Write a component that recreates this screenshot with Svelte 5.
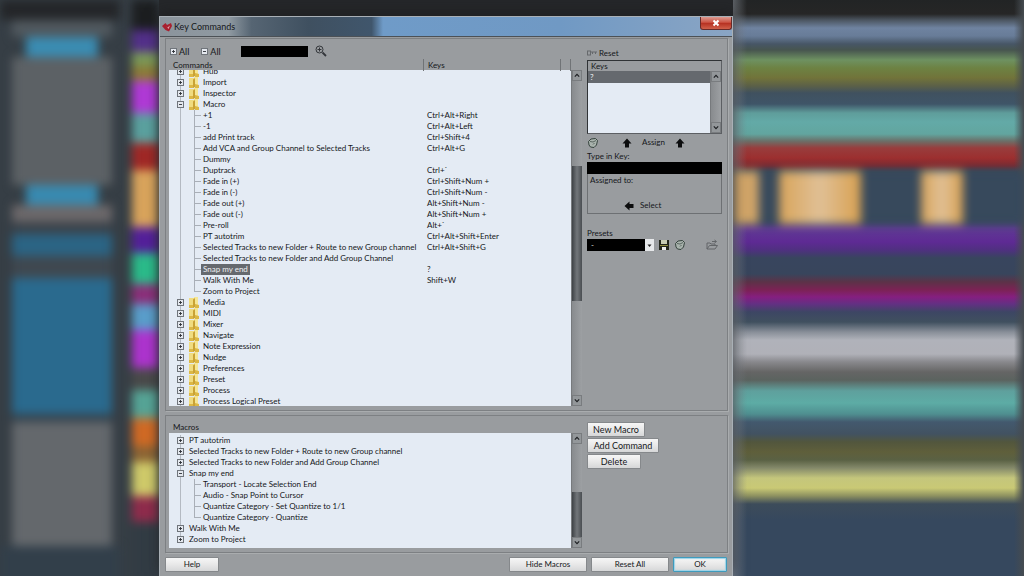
<script lang="ts">
	type Command = { name: string; keys?: string; kind: "folder" | "item"; open?: boolean };
	type Macro = { name: string; steps?: string[] };
	type Block = { h: number; color: string; from?: number; to?: number };

	const folder = (name: string, open = false): Command => ({ name, kind: "folder", open });
	const item = (name: string, keys = ""): Command => ({ name, keys, kind: "item" });

	const commands: Command[] = [
		folder("Hub"),
		folder("Import"),
		folder("Inspector"),
		folder("Macro", true),
		item("+1", "Ctrl+Alt+Right"),
		item("-1", "Ctrl+Alt+Left"),
		item("add Print track", "Ctrl+Shift+4"),
		item("Add VCA and Group Channel to Selected Tracks", "Ctrl+Alt+G"),
		item("Dummy"),
		item("Duptrack", "Ctrl+`"),
		item("Fade in (+)", "Ctrl+Shift+Num +"),
		item("Fade in (-)", "Ctrl+Shift+Num -"),
		item("Fade out (+)", "Alt+Shift+Num -"),
		item("Fade out (-)", "Alt+Shift+Num +"),
		item("Pre-roll", "Alt+`"),
		item("PT autotrim", "Ctrl+Alt+Shift+Enter"),
		item("Selected Tracks to new Folder + Route to new Group channel", "Ctrl+Alt+Shift+G"),
		item("Selected Tracks to new Folder and Add Group Channel"),
		item("Snap my end", "?"),
		item("Walk With Me", "Shift+W"),
		item("Zoom to Project"),
		folder("Media"),
		folder("MIDI"),
		folder("Mixer"),
		folder("Navigate"),
		folder("Note Expression"),
		folder("Nudge"),
		folder("Preferences"),
		folder("Preset"),
		folder("Process"),
		folder("Process Logical Preset")
	];

	const macros: Macro[] = [
		{ name: "PT autotrim" },
		{ name: "Selected Tracks to new Folder + Route to new Group channel" },
		{ name: "Selected Tracks to new Folder and Add Group Channel" },
		{
			name: "Snap my end",
			steps: [
				"Transport - Locate Selection End",
				"Audio - Snap Point to Cursor",
				"Quantize Category - Set Quantize to 1/1",
				"Quantize Category - Quantize"
			]
		},
		{ name: "Walk With Me" },
		{ name: "Zoom to Project" }
	];

	// inspector column; from/to are insets in percent
	const inspector: Block[] = [
		{ h: 20, color: "#242629", from: 0, to: 0 },
		{ h: 17, color: "#50585e" },
		{ h: 20, color: "#3a8cb2", from: 22, to: 18 },
		{ h: 128, color: "#5c6165" },
		{ h: 20, color: "#388ab0", from: 22, to: 18 },
		{ h: 17, color: "#6c686a" },
		{ h: 12, color: "#3a424a" },
		{ h: 22, color: "#2b6484" },
		{ h: 22, color: "#3f4850" },
		{ h: 136, color: "#2a6a8e" },
		{ h: 8, color: "#35424c" },
		{ h: 124, color: "#64686c" },
		{ h: 40, color: "#323f4a", from: 0, to: 0 }
	];

	const swatches: Block[] = [
		{ h: 30, color: "#1c1e20" },
		{ h: 22, color: "#53308a" },
		{ h: 14, color: "#7a9a58" },
		{ h: 15, color: "#8d7a38" },
		{ h: 32, color: "#b03ad6" },
		{ h: 30, color: "#5ba19f" },
		{ h: 27, color: "#a02826" },
		{ h: 57, color: "#d9a45c" },
		{ h: 26, color: "#54209a" },
		{ h: 31, color: "#2bbb8a" },
		{ h: 20, color: "#8c2f7a" },
		{ h: 26, color: "#5a9ecb" },
		{ h: 38, color: "#ad34ce" },
		{ h: 22, color: "#4a4a4a" },
		{ h: 28, color: "#56a496" },
		{ h: 28, color: "#d06a25" },
		{ h: 16, color: "#8c6434" },
		{ h: 34, color: "#cfca6a" },
		{ h: 26, color: "#8f2c4c" },
		{ h: 60, color: "#323c44" }
	];

	let selected = $state("Snap my end");
	let search = $state("");
	let typed = $state("");
</script>

{#snippet toggle(open: boolean)}
	<svg class="toggle" viewBox="0 0 7 7" aria-hidden="true">
		<rect x=".5" y=".5" width="6" height="6" fill="#e4e8ee" stroke="#70757b" />
		<path d={open ? "M2 3.5h3" : "M2 3.5h3M3.5 2v3"} stroke="#2d3035" stroke-width=".9" />
	</svg>
{/snippet}

{#snippet scrollbar(top: number, size: number)}
	<div class="scroll" aria-hidden="true">
		<svg class="cap" viewBox="0 0 11 11"><path d="M2.500 7l3-3 3 3" /></svg>
		<div class="trough">
			<div style="height: {top}%"></div>
			{#if size}<div class="thumb" style="height: {size}%"></div>{/if}
		</div>
		<svg class="cap" viewBox="0 0 11 11"><path d="M2.500 4l3 3 3-3" /></svg>
	</div>
{/snippet}

{#snippet arrow(angle: number)}
	<svg class="arrow" viewBox="0 0 10 10" aria-hidden="true">
		<path d="M5 .5L9.500 5.500H7V9.500H3V5.500H.5z" fill="#0c0d0e" transform="rotate({angle} 5 5)" />
	</svg>
{/snippet}

{#snippet trash()}
	<svg class="icon" viewBox="0 0 12 12" fill="none" stroke="#35433d" aria-hidden="true">
		<path d="M1.500 4.500L4 2l4.500-.5 2 2L9.500 8 7 10.500 3.500 10 2 8z" fill="#a9b3ad" />
		<path d="M3 4.500l3 .5 3-1.500M6 7.500L7.500 6" stroke-width=".7" />
	</svg>
{/snippet}

<main class="desktop">
	<div class="project left" aria-hidden="true">
		<div class="inspector">
			{#each inspector as b}
				<div style="height: {b.h}px; background: {b.color}; margin: 0 {b.to ?? 7}% 0 {b.from ?? 10}%"></div>
			{/each}
		</div>
		<div class="swatches">
			{#each swatches as b}
				<div style="height: {b.h}px; background: {b.color}"></div>
			{/each}
		</div>
	</div>

	<section class="dialog" aria-label="Key Commands">
		<header class="titlebar">
			<svg class="logo" viewBox="0 0 10 10" aria-hidden="true">
				<path d="M0 4l3.500-3L5 3l4-2 1 3-3 5.500L3.500 8z" fill="#a8202f" />
				<path d="M4 4l1.500 1.500L8 3.500 6.500 7z" fill="#dfa3a8" />
			</svg>
			<h1>Key Commands</h1>
			<button class="close" aria-label="Close">
				<svg viewBox="0 0 8 8"><path d="M1.500 1.500l5 5M6.500 1.500l-5 5" stroke="#fff" stroke-width="2" /></svg>
			</button>
		</header>

		<div class="body">
			<div class="group top">
				<div class="main">
					<div class="tools">
						<button class="flat">{@render toggle(false)}All</button>
						<button class="flat">{@render toggle(true)}All</button>
						<input class="search" aria-label="Search" bind:value={search} />
						<button class="flat" aria-label="Find">
							<svg class="find" viewBox="0 0 12 12" fill="none" stroke="#33363a">
								<circle cx="4.500" cy="4.500" r="3.500" />
								<path d="M2.500 4.500h4M4.500 2.500v4" />
								<path d="M7.500 7.500l3.500 3.500" stroke-width="1.800" />
							</svg>
						</button>
					</div>
					<div class="list commands">
						<table>
							<thead>
								<tr><th>Commands</th><th>Keys</th><th></th></tr>
							</thead>
							<tbody>
								{#each commands as c, i}
									<tr onclick={() => (selected = c.name)}>
										<td class={c.kind} class:last={commands[i + 1]?.kind === "folder"}>
											{#if c.kind === "folder"}
												{@render toggle(!!c.open)}
												<svg class="folder-icon" viewBox="0 0 10 11" aria-hidden="true">
													<path d="M0 1h5v10H0z" fill="#f0dc80" />
													<path d="M5 0h4v10H5z" fill="#f5e694" />
													<path d="M4 2.500L6 1v9l-2 1z" fill="#c9a235" />
													<path d="M0 8h4v3H0zM6 7l4 1v3H6z" fill="#dcb845" />
												</svg>
											{/if}
											<span class="label" class:selected={c.name === selected}>{c.name}</span>
										</td>
										<td>{c.keys ?? ""}</td>
									</tr>
								{/each}
							</tbody>
						</table>
						{@render scrollbar(27, 43)}
					</div>
				</div>

				<aside>
					<button class="flat reset"><svg class="key" viewBox="0 0 10 6" fill="none" stroke="#66696c"><rect x=".5" y="1" width="3" height="4" /><path d="M4 2h6M5.500 2v2M8.500 2v2" /></svg>Reset</button>
					<div class="keys-box">
						<div class="keys-head">Keys</div>
						<div class="keys-list">
							<div class="keys-items"><div class="key-row">?</div></div>
							{@render scrollbar(0, 0)}
						</div>
					</div>
					<div class="assign">
						<button class="flat" aria-label="Delete key">{@render trash()}</button>
						<button class="flat mid">{@render arrow(0)}Assign{@render arrow(0)}</button>
					</div>
					<label for="typekey">Type in Key:</label>
					<input id="typekey" class="typekey" bind:value={typed} />
					<div class="assigned">
						<span>Assigned to:</span>
						<button class="flat select">{@render arrow(-90)}Select</button>
					</div>
					<label for="presets">Presets</label>
					<div class="presets">
						<span class="combo">
							<select id="presets"><option>-</option></select>
							<svg viewBox="0 0 9 11" aria-hidden="true"><path d="M2.500 5h4L4.500 7.500z" fill="#222" /></svg>
						</span>
						<button class="flat" aria-label="Save preset">
							<svg class="icon" viewBox="0 0 12 12">
								<path d="M1 1h10v10H1z" fill="#23261c" />
								<path d="M3 1h6v4H3z" fill="#c8ccb4" />
								<path d="M2 6h8v1H2z" fill="#8c8a3e" />
								<path d="M4 8h4v3H4z" fill="#eee" />
							</svg>
						</button>
						<button class="flat" aria-label="Remove preset">{@render trash()}</button>
						<button class="flat import" aria-label="Import">
							<svg class="icon" viewBox="0 0 12 12" fill="none" stroke="#626568">
								<path d="M1 10V4h3l1 1h4v2M1 10l2.500-3.500h8L9 10zM6 2.500h4M8.500 1l2 1.500-2 1.500" />
							</svg>
						</button>
					</div>
				</aside>
			</div>

			<div class="group bottom">
				<div class="main">
					<h2>Macros</h2>
					<div class="list">
						<ul class="macros">
							{#each macros as m}
								<li>
									<div class="node">{@render toggle(!!m.steps)}<span>{m.name}</span></div>
									{#if m.steps}
										<ul>
											{#each m.steps as step, i}
												<li class="item" class:last={i === m.steps.length - 1}>
													<span class="label">{step}</span>
												</li>
											{/each}
										</ul>
									{/if}
								</li>
							{/each}
						</ul>
						{@render scrollbar(52, 48)}
					</div>
				</div>
				<aside class="actions">
					<button class="btn w58">New Macro</button>
					<button class="btn w72">Add Command</button>
					<button class="btn">Delete</button>
				</aside>
			</div>

			<footer>
				<button class="btn">Help</button>
				<span class="spring"></span>
				<button class="btn w78">Hide Macros</button>
				<button class="btn w78">Reset All</button>
				<button class="btn ok">OK</button>
			</footer>
		</div>
	</section>

	<div class="project right" aria-hidden="true">
		<div class="clips">
			<div style="flex: 26"></div>
			<div class="gap" style="flex: 20"></div>
			<div class="bright" style="flex: 82"></div>
			<div class="gap" style="flex: 60"></div>
			<div class="bright" style="flex: 42"></div>
			<div class="gap" style="flex: 61"></div>
		</div>
	</div>
</main>

<style>
	:global(body) {
		margin: 0;
		background: #25272a;
	}

	.desktop {
		display: grid;
		grid-template-columns: 159fr 574fr 291fr;
		min-height: 100vh;
		overflow: hidden;
		font: 8px/11px Lato, "Open Sans", sans-serif;
		color: #15171a;
	}

	button,
	input,
	select {
		font: inherit;
		color: inherit;
		box-sizing: border-box;
		margin: 0;
		padding: 0;
		border: 0;
		border-radius: 0;
	}

	svg {
		display: block;
		flex: none;
	}

	.project {
		overflow: hidden;
		min-width: 0;
		max-height: 100vh;
	}

	/* blurred project window behind the dialog */
	.left {
		display: grid;
		grid-template-columns: 120fr 39fr;
		background: #363e45;
	}

	.inspector {
		filter: blur(5px);
	}

	.swatches {
		padding-left: 12px;
		filter: blur(5px);
	}

	.right {
		background:
			linear-gradient(90deg, #80868e99, transparent 14px, transparent calc(100% - 10px), #454b50),
			linear-gradient(
				#222425 0, #262626 14px, #4b5560 20px, #6f83a0 28px, #687c98 36px, #475666 44px,
				#47554f 50px, #6e9161 60px, #6d8243 68px, #71733a 78px, #5b6048 86px, #40515f 93px,
				#3f5568 104px, #5f9d9b 113px, #63aaa7 122px, #62a59f 134px, #6b7069 141px, #983d3d 148px,
				#9c2f2f 158px, #7a2b32 166px, #3a4655 172px, #34495e 180px, #34495e 218px, #5f3b93 228px,
				#5e2a94 242px, #4f3080 250px, #38455e 258px, #38455c 274px, #5c3248 282px, #7c2255 290px,
				#851f80 297px, #633083 304px, #3d4664 312px, #40505f 322px, #888e98 332px, #b0b2ba 340px,
				#b0b1b8 354px, #88888c 362px, #656565 372px, #5b635f 380px, #5fa09d 391px, #5daca5 403px,
				#4f8f90 414px, #43596e 422px, #425261 434px, #52563d 442px, #5f5f3b 452px, #5a6144 460px,
				#84896a 468px, #c4c67c 478px, #c9c975 488px, #8c9060 496px, #3d4c5a 504px, #36485e 520px
			);
	}

	.clips {
		display: flex;
		height: 53px;
		margin-top: 171px;
		filter: blur(5px);
	}

	.clips div {
		background: #d0a468;
	}

	.clips .bright {
		background: linear-gradient(90deg, #d8a45a, #e0c096 50%, #d8a050);
	}

	.clips .gap {
		background: #37495c;
	}

	/* dialog frame */
	.dialog {
		z-index: 1;
		display: flex;
		flex-direction: column;
		min-width: 0;
		margin-top: 16px;
		border: 1px solid #a9b0b6;
		border-bottom: 0;
		box-shadow: 0 -4px 12px #1a1a1a88;
	}

	.titlebar {
		display: flex;
		align-items: center;
		height: 19px;
		padding-left: 2px;
		background: linear-gradient(90deg, #8b949c 0, #909aa2 12%, #566573 16%, #3f5060 26%, #40566c 37%, #6f9bc8 39%, #7099c4 70%, #8aa5c4);
		border-bottom: 1px solid #4c5156;
	}

	.logo {
		width: 10px;
		height: 10px;
	}

	h1 {
		margin: 0;
		padding-left: 2px;
		font: inherit;
		font-size: 9px;
	}

	.close {
		display: grid;
		place-items: center;
		align-self: start;
		width: 32px;
		height: 13px;
		margin-left: auto;
		border: 1px solid #682b28;
		border-top: 0;
		border-radius: 0 0 3px 3px;
		background: linear-gradient(#dc9a90, #cc5444 45%, #b52f20 50%, #d0604a);
	}

	.close svg {
		width: 8px;
		height: 8px;
	}

	.body {
		flex: 1;
		padding: 1px 4px 0 5px;
		background: #999c9f;
	}

	.group {
		display: grid;
		grid-template-columns: minmax(0, 1fr) 135px;
		column-gap: 5px;
		padding: 4px 5px 4px 3px;
		border: 1px solid #7d8083;
		box-shadow: 1px 1px 0 #a9acae;
	}

	.main {
		min-width: 0;
	}

	.flat {
		display: flex;
		align-items: center;
		gap: 2px;
		background: none;
	}

	.toggle {
		width: 7px;
		height: 7px;
	}

	.tools {
		display: flex;
		align-items: center;
		gap: 12px;
		height: 16px;
		padding-left: 1px;
		font-size: 9px;
	}

	.search {
		width: 67px;
		height: 11px;
		margin: 0 -5px 0 8px;
		background: #000;
		color: #ddd;
	}

	.find {
		width: 12px;
		height: 12px;
	}

	.list {
		display: flex;
		overflow: hidden;
	}

	.commands {
		height: 347px;
	}

	table {
		flex: 1;
		min-width: 0;
		display: block;
	}

	thead {
		display: block;
		line-height: 12px;
	}

	thead tr {
		display: grid;
		grid-template-columns: 255fr 137fr 10px;
		height: 11px;
	}

	th {
		padding: 0 4px;
		border-right: 1px solid #707376;
		font-weight: normal;
		text-align: left;
	}

	tbody {
		display: block;
		height: 336px;
		overflow: hidden;
		background: #e4ebf4;
	}

	tbody tr {
		display: grid;
		grid-template-columns: 255fr 147fr;
		height: 11px;
	}

	/* list is scrolled part of a row down */
	tbody tr:first-child {
		margin-top: -4px;
	}

	td {
		padding: 0 0 0 3px;
		white-space: nowrap;
	}

	td:first-child {
		display: flex;
		align-items: center;
		padding-left: 8px;
		background: linear-gradient(#b4bac2, #b4bac2) 11px 0 / 1px 100% no-repeat;
	}

	.folder-icon {
		width: 10px;
		height: 11px;
		margin: 0 2px 0 5px;
	}

	.label {
		padding: 0 2px;
		white-space: nowrap;
	}

	.label.selected {
		background: #65696e;
		color: #eef0f2;
	}

	/* branch lines in front of leaf rows */
	.item::before {
		content: "";
		width: 7px;
		height: 11px;
		margin-left: 17px;
		background:
			linear-gradient(#a9afb7, #a9afb7) 0 0 / 1px 100% no-repeat,
			linear-gradient(#a9afb7, #a9afb7) 0 5px / 100% 1px no-repeat;
	}

	.item.last::before {
		background-size:
			1px 5px,
			100% 1px;
	}

	.scroll {
		display: flex;
		flex-direction: column;
		width: 11px;
		box-sizing: border-box;
		border-left: 1px solid #777a7d;
		background: #93979a;
	}

	.commands .scroll {
		margin-top: 11px;
	}

	.cap {
		width: 10px;
		height: 11px;
		box-sizing: border-box;
		border: 1px solid #797c7f;
		fill: none;
		stroke: #1d1f22;
		stroke-width: 1.6;
	}

	.trough {
		flex: 1;
		background: linear-gradient(90deg, #888b8e, #9da0a3);
	}

	.thumb {
		background: linear-gradient(90deg, #3e4246, #72767a 50%, #4a4e52);
	}

	/* right column */
	aside {
		display: flex;
		flex-direction: column;
		align-items: stretch;
	}

	.reset {
		height: 17px;
		padding-top: 3px;
	}

	.key {
		width: 10px;
		height: 6px;
	}

	.keys-box {
		border: 1px solid #5c5f63;
		border-top-color: #303336;
		border-left-color: #303336;
	}

	.keys-head {
		padding-left: 3px;
		height: 10px;
	}

	.keys-list {
		display: flex;
		height: 62px;
	}

	.keys-items {
		flex: 1;
		background: #e4ebf4;
	}

	.key-row {
		height: 12px;
		padding-left: 2px;
		line-height: 12px;
		background: #65696e;
		color: #eef0f2;
	}

	.assign {
		display: grid;
		grid-template-columns: 14px 1fr;
		align-items: center;
		height: 17px;
	}

	.mid {
		gap: 10px;
		padding-left: 21px;
	}

	.arrow {
		width: 10px;
		height: 10px;
	}

	.icon {
		width: 12px;
		height: 12px;
	}

	.typekey {
		width: 100%;
		height: 12px;
		background: #000;
		color: #ddd;
	}

	.assigned {
		height: 40px;
		box-sizing: border-box;
		padding: 1px 2px;
		border: 1px solid #6d7073;
		border-top: 0;
		margin-bottom: 14px;
	}

	.select {
		gap: 6px;
		padding: 14px 0 0 34px;
	}

	.presets {
		display: flex;
		align-items: center;
		gap: 4px;
	}

	.combo {
		display: grid;
		width: 67px;
	}

	.combo > * {
		grid-area: 1 / 1;
	}

	.combo select {
		width: 100%;
		height: 12px;
		padding-left: 4px;
		appearance: none;
		background: #000;
		color: #ddd;
	}

	.combo svg {
		justify-self: end;
		width: 9px;
		height: 12px;
		background: #e6e8ea;
		pointer-events: none;
	}

	.import {
		margin-left: auto;
		padding-right: 4px;
	}

	/* macros */
	.bottom {
		margin-top: 4px;
		padding-top: 6px;
	}

	h2 {
		margin: 0;
		padding-left: 4px;
		font: inherit;
	}

	.bottom .list {
		height: 115px;
	}

	ul {
		margin: 0;
		padding: 0;
		list-style: none;
	}

	.macros {
		flex: 1;
		padding: 2px 0 0 8px;
		background: #e4ebf4;
	}

	.macros > li {
		background: linear-gradient(#b4bac2, #b4bac2) 3px 0 / 1px 100% no-repeat;
	}

	.macros > li:last-child {
		background-size: 1px 5px;
	}

	.node {
		display: flex;
		align-items: center;
		gap: 5px;
	}

	.macros .item {
		display: flex;
	}

	.actions {
		align-items: flex-start;
		gap: 1px;
	}

	.btn {
		width: 54px;
		height: 15px;
		border: 1px solid #85888b;
		border-radius: 1px;
		background: linear-gradient(#f6f6f6, #e8e8e8 50%, #d6d7d8);
		white-space: nowrap;
	}

	.actions .btn {
		font-size: 9px;
	}

	.btn.w58 {
		width: 58px;
	}

	.btn.w72 {
		width: 72px;
	}

	.btn.w78 {
		width: 78px;
	}

	.btn.ok {
		border-color: #3f9bbd;
		box-shadow: inset 0 0 1px 1px #9bd3e8;
	}

	footer {
		display: flex;
		gap: 4px;
		padding: 4px 1px 4px 0;
	}

	.spring {
		flex: 1;
	}
</style>
